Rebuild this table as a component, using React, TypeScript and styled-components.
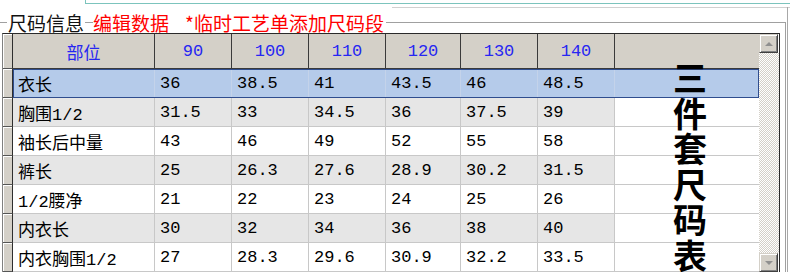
import React from 'react';
import styled, { createGlobalStyle } from 'styled-components';

const GlobalStyle = createGlobalStyle`
  body {
    margin: 0;
    background: #ffffff;
  }
`;

const COLS = '142px 77px 77px 77px 75px 77px 77px 144px';

const header = ['部位', '90', '100', '110', '120', '130', '140', ''];

const rows = [
  ['衣长', '36', '38.5', '41', '43.5', '46', '48.5'],
  ['胸围1/2', '31.5', '33', '34.5', '36', '37.5', '39'],
  ['袖长后中量', '43', '46', '49', '52', '55', '58'],
  ['裤长', '25', '26.3', '27.6', '28.9', '30.2', '31.5'],
  ['1/2腰净', '21', '22', '23', '24', '25', '26'],
  ['内衣长', '30', '32', '34', '36', '38', '40'],
  ['内衣胸围1/2', '27', '28.3', '29.6', '30.9', '32.2', '33.5'],
];

type Tone = 'selected' | 'gray' | 'white';

const toneOf = (i: number): Tone => (i === 0 ? 'selected' : i % 2 === 1 ? 'gray' : 'white');

const App: React.FC = () => {
  return (
    <Page>
      <GlobalStyle />
      <TopStrip>
        <TealBox />
        <GrayRule />
      </TopStrip>
      <Frame>
        <GroupBox>
          <LegendRow>
            <LegendLine width={7} />
            <Title>尺码信息</Title>
            <LegendLine width={8} />
            <RedLabel>编辑数据</RedLabel>
            <LegendGap />
            <RedLabel>*临时工艺单添加尺码段</RedLabel>
            <LegendTail />
          </LegendRow>
          <Body>
            <Grid>
              <Table>
                <HeaderRow>
                  <RowHead />
                  {header.map((h, i) => (
                    <HeadCell key={i} last={i === header.length - 1}>
                      {h}
                    </HeadCell>
                  ))}
                </HeaderRow>
                {rows.map((r, i) => (
                  <DataRow key={i}>
                    <RowHead />
                    <Cells selected={i === 0}>
                      {r.map((c, j) => (
                        <Cell key={j} tone={toneOf(i)}>
                          {c}
                        </Cell>
                      ))}
                      <Cell tone={i === 0 ? 'selected' : 'white'} last />
                    </Cells>
                  </DataRow>
                ))}
                <BigLabel>三件套尺码表</BigLabel>
              </Table>
              <ScrollBar>
                <ScrollButton>
                  <Arrow dir="up" />
                </ScrollButton>
                <Track />
                <ScrollButton>
                  <Arrow dir="down" />
                </ScrollButton>
              </ScrollBar>
            </Grid>
          </Body>
        </GroupBox>
        <OuterEdge />
      </Frame>
    </Page>
  );
};

export default App;

const Page = styled.div`
  width: 790px;
  height: 272px;
  overflow: hidden;
  background: #ffffff;
  font-family: 'Noto Sans CJK SC', sans-serif;
`;

const TopStrip = styled.div`
  height: 12px;
  display: flex;
  flex-direction: column;
`;

const TealBox = styled.div`
  margin-left: 85px;
  height: 3px;
  border-left: 1px solid #7cc4bd;
  border-bottom: 1px solid #7cc4bd;
`;

const GrayRule = styled.div`
  margin-top: 3px;
  margin-left: 392px;
  height: 1px;
  background: #d0d0d0;
`;

const Frame = styled.div`
  display: flex;
`;

const GroupBox = styled.div`
  width: 786px;
  display: flex;
  flex-direction: column;
`;

const OuterEdge = styled.div`
  width: 2px;
  margin-left: 1px;
  margin-top: -5px;
  border-left: 1px solid #a8a8a8;
`;

const LegendRow = styled.div`
  height: 21px;
  display: flex;
  align-items: center;
`;

const LegendLine = styled.div<{ width: number }>`
  width: ${({ width }) => width}px;
  align-self: flex-end;
  height: 10px;
  border-top: 1px solid #a0a0a0;
`;

const LegendGap = styled.div`
  width: 16px;
`;

const LegendTail = styled.div`
  flex: 1;
  align-self: flex-end;
  height: 10px;
  border-top: 1px solid #a0a0a0;
  border-right: 1px solid #a0a0a0;
  margin-left: 2px;
`;

const Title = styled.span`
  font-size: 19px;
  line-height: 21px;
  color: #111111;
  padding: 0 1px;
`;

const RedLabel = styled.span`
  font-size: 19px;
  line-height: 21px;
  color: #ff0000;
`;

const Body = styled.div`
  border-right: 1px solid #a0a0a0;
  padding: 0 5px 0 2px;
`;

const Grid = styled.div`
  display: flex;
  border-left: 1px solid #808080;
  border-top: 1px solid #2a2a2a;
  border-right: 1px solid #2a2a2a;
  background: #ffffff;
`;

const Table = styled.div`
  position: relative;
  width: 756px;
  display: flex;
  flex-direction: column;
`;

const HeaderRow = styled.div`
  display: grid;
  grid-template-columns: 10px ${COLS};
  height: 35px;
`;

const DataRow = styled.div`
  display: flex;
  height: 29px;
`;

const RowHead = styled.div`
  box-sizing: border-box;
  width: 10px;
  background: #d4d0c8;
  border-right: 1px solid #2e2e2e;
  border-bottom: 1px solid #555555;
  box-shadow: inset 1px 1px 0 #ffffff;
`;

const HeadCell = styled.div<{ last?: boolean }>`
  box-sizing: border-box;
  background: #d4d0c8;
  border-right: ${({ last }) => (last ? 'none' : '1px solid #3a3a3a')};
  border-bottom: 1px solid #3a3a3a;
  display: flex;
  align-items: center;
  justify-content: center;
  color: #2626f2;
  font-family: 'Liberation Mono', 'Noto Sans CJK SC', monospace;
  font-size: 17px;
`;

const Cells = styled.div<{ selected?: boolean }>`
  flex: 1;
  display: grid;
  grid-template-columns: ${COLS};
  outline: ${({ selected }) => (selected ? '1px solid #2f4d8e' : 'none')};
  outline-offset: -1px;
`;

const toneColor: Record<Tone, string> = {
  selected: '#b5cbea',
  gray: '#e6e6e6',
  white: '#ffffff',
};

const Cell = styled.div<{ tone: Tone; last?: boolean }>`
  box-sizing: border-box;
  background: ${({ tone }) => toneColor[tone]};
  border-right: ${({ last, tone }) =>
    last ? 'none' : tone === 'selected' ? '1px solid #c4d3ea' : '1px solid #c8c8c8'};
  border-bottom: 1px solid #c8c8c8;
  padding-left: 5px;
  display: flex;
  align-items: center;
  color: #000000;
  font-family: 'Liberation Mono', 'Noto Sans CJK SC', monospace;
  font-size: 17px;
  white-space: nowrap;
`;

const BigLabel = styled.div`
  position: absolute;
  left: 670px;
  top: 25px;
  width: 34px;
  font-family: 'Noto Sans CJK SC', sans-serif;
  font-size: 34px;
  font-weight: 700;
  line-height: 35.5px;
  color: #000000;
  word-break: break-all;
`;

const ScrollBar = styled.div`
  width: 20px;
  display: flex;
  flex-direction: column;
`;

const ScrollButton = styled.div`
  box-sizing: border-box;
  height: 19px;
  width: 19px;
  background: #d4d0c8;
  border-top: 1px solid #d4d0c8;
  border-left: 1px solid #d4d0c8;
  border-right: 1px solid #404040;
  border-bottom: 1px solid #404040;
  box-shadow: inset 1px 1px 0 #ffffff, inset -1px -1px 0 #808080;
  display: flex;
  align-items: center;
  justify-content: center;
`;

const Arrow = styled.div<{ dir: 'up' | 'down' }>`
  width: 0;
  height: 0;
  border-left: 4px solid transparent;
  border-right: 4px solid transparent;
  ${({ dir }) =>
    dir === 'up' ? 'border-bottom: 4px solid #909090;' : 'border-top: 4px solid #909090;'}
`;

const Track = styled.div`
  flex: 1;
  background-color: #e8e6e1;
  background-image: repeating-conic-gradient(#d4d0c8 0 25%, #ffffff 0 50%);
  background-size: 2px 2px;
`;
